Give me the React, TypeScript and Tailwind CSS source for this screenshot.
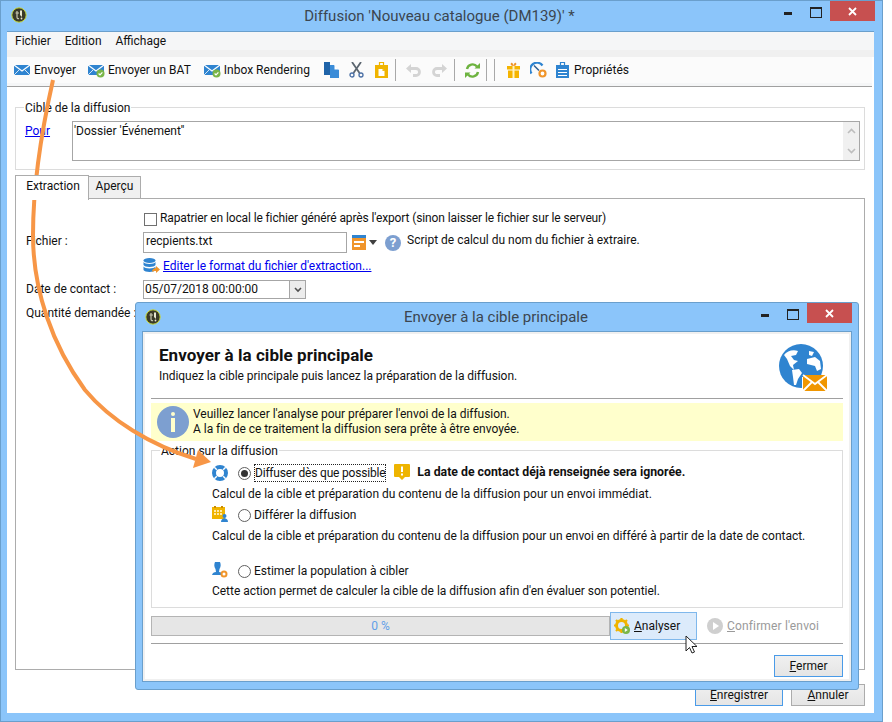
import React from "react";

const FONT = { fontFamily: 'Roboto, "Open Sans", sans-serif' };

function AppLogo() {
  return (
    <svg width="16" height="16" viewBox="0 0 16 16" className="shrink-0">
      <circle cx="8" cy="8" r="7.200" fill="#3a3a28" stroke="#c8d93a" strokeWidth="1" />
      <path d="M6 4v6M4.500 6H8M6 10c0 1.500 1 2 2 1.500" stroke="#c9c9b0" strokeWidth="1.200" fill="none" />
      <path d="M10.500 3.500v6M9.500 3.500v5" stroke="#e8e8d0" strokeWidth="1" fill="none" />
      <circle cx="10.500" cy="11.500" r="0.900" fill="#e8e8d0" />
    </svg>
  );
}

function WinButtons() {
  return (
    <div className="flex items-start">
      <div className="w-[8px] h-[3px] bg-[#222222] mt-[11px]" />
      <div className="w-[10px] h-[8px] border border-[#222222] border-t-2 mt-[6px] ml-[18px] box-content" />
      <div className="w-[45px] h-[20px] bg-[#c75050] ml-[8px] flex items-center justify-center">
        <svg width="9" height="9" viewBox="0 0 9 9">
          <path d="M1 1l7 7M8 1L1 8" stroke="#ffffff" strokeWidth="1.800" />
        </svg>
      </div>
    </div>
  );
}

function Envelope({ check }: { check?: boolean }) {
  return (
    <svg width="17" height="16" viewBox="0 0 17 16" className="shrink-0">
      <path d="M0 3h16v10H0z" fill="#2f84d0" />
      <path d="M0 3l8 6 8-6" stroke="#ffffff" strokeWidth="1.200" fill="none" />
      <path d="M0 13l5-5M16 13l-5-5" stroke="#ffffff" strokeWidth="0.800" fill="none" />
      {check && <circle cx="12.500" cy="11.500" r="4" fill="#7ab648" />}
      {check && <path d="M10.600 11.500l1.400 1.400 2.400-2.600" stroke="#ffffff" strokeWidth="1.200" fill="none" />}
    </svg>
  );
}

function Sep({ ml }: { ml: string }) {
  return <div className={`w-px h-[22px] bg-[#a8a8a8] ${ml}`} />;
}

function Toolbar() {
  return (
    <div className="h-[26px] bg-[#fbfbfb] flex items-center pl-[7px] text-[12px] text-[#111111] mr-[2px]">
      <Envelope />
      <span className="ml-[3px]">Envoyer</span>
      <div className="ml-[12px]"><Envelope check /></div>
      <span className="ml-[3px]">Envoyer un BAT</span>
      <div className="ml-[13px]"><Envelope check /></div>
      <span className="ml-[3px]">Inbox Rendering</span>
      <svg width="15" height="16" viewBox="0 0 15 16" className="ml-[14px] shrink-0">
        <path d="M0 0h6v13H0z" fill="#1f63a8" />
        <path d="M6 3h4l5 5v8H6z" fill="#3a8cd8" />
        <path d="M10.500 3v4.500H15z" fill="#ffffff" />
      </svg>
      <svg width="15" height="16" viewBox="0 0 15 16" className="ml-[10px] shrink-0">
        <path d="M3 0l7.500 11M12 0L4.500 11" stroke="#5c6670" strokeWidth="1.800" />
        <circle cx="3" cy="13" r="2" fill="none" stroke="#4a6fa5" strokeWidth="1.300" />
        <circle cx="12" cy="13" r="2" fill="none" stroke="#4a6fa5" strokeWidth="1.300" />
      </svg>
      <svg width="13" height="16" viewBox="0 0 13 16" className="ml-[11px] shrink-0">
        <path d="M0 3h13v13H0z" fill="#f0b400" />
        <path d="M4.500 .5h4v3h-4z" fill="#fbfbfb" stroke="#f0b400" strokeWidth="1.200" />
        <path d="M3.500 7h4l2 2v5h-6z" fill="#ffffff" />
        <path d="M7.500 7v2h2z" fill="#f0b400" />
      </svg>
      <Sep ml="ml-[7px]" />
      <svg width="16" height="14" viewBox="0 0 16 14" className="ml-[10px] shrink-0">
        <path d="M0 5.500L5 1v9z" fill="#d4d4d4" />
        <path d="M4 5.500h6a3.500 3.500 0 0 1 0 7H7" stroke="#d4d4d4" strokeWidth="2.800" fill="none" />
      </svg>
      <svg width="16" height="14" viewBox="0 0 16 14" className="ml-[9px] shrink-0">
        <path d="M16 5.500L11 1v9z" fill="#d4d4d4" />
        <path d="M12 5.500H6a3.500 3.500 0 0 0 0 7h3" stroke="#d4d4d4" strokeWidth="2.800" fill="none" />
      </svg>
      <Sep ml="ml-[7px]" />
      <svg width="15" height="15" viewBox="0 0 15 15" className="ml-[10px] shrink-0">
        <path d="M2 6a5.700 5.700 0 0 1 10-2.500" stroke="#6db33f" strokeWidth="2.400" fill="none" />
        <path d="M9.500 5.500H15V0z" fill="#6db33f" />
        <path d="M13 9a5.700 5.700 0 0 1-10 2.500" stroke="#6db33f" strokeWidth="2.400" fill="none" />
        <path d="M5.500 9.500H0V15z" fill="#6db33f" />
      </svg>
      <Sep ml="ml-[6px]" />
      <Sep ml="ml-[7px]" />
      <svg width="13" height="16" viewBox="0 0 13 16" className="ml-[12px] shrink-0">
        <path d="M0 4h13v3.500H0zM1 8.500h11V16H1z" fill="#f5b400" />
        <path d="M5.500 4h2v12h-2z" fill="#fff3c4" />
        <path d="M6.500 4C4 4 3 2 4 1s2.500 1 2.500 3C6.500 2 8 0 9 1s0 3-2.500 3z" fill="#f0952b" />
      </svg>
      <svg width="17" height="16" viewBox="0 0 17 16" className="ml-[10px] shrink-0">
        <path d="M1.500 11.500A6.500 6.500 0 0 1 12.500 3.500" stroke="#2f84d0" strokeWidth="2.200" fill="none" />
        <path d="M4 3.500l5 5" stroke="#2f5f90" strokeWidth="1.500" />
        <circle cx="12.500" cy="11.500" r="3" fill="#ffffff" stroke="#f0952b" strokeWidth="2.200" />
      </svg>
      <svg width="13" height="16" viewBox="0 0 13 16" className="ml-[9px] shrink-0">
        <path d="M0 3h13v13H0z" fill="#2f84d0" />
        <path d="M4.500 .5h4v3h-4z" fill="#fbfbfb" stroke="#2f84d0" strokeWidth="1.200" />
        <path d="M2 7.500h9M2 10.500h9M2 13.500h9" stroke="#ffffff" strokeWidth="1" />
      </svg>
      <span className="ml-[5px]">Propriétés</span>
    </div>
  );
}

function PaneForm() {
  return (
    <div className="pl-[10px] text-[12px] text-[#111111]">
      <div className="flex items-center h-[14px] mt-[13px] pl-[118px]">
        <div className="w-[13px] h-[13px] border border-[#707070] bg-white" />
        <span className="ml-[3px] -mt-[2px] whitespace-nowrap tracking-[-0.12px]">Rapatrier en local le fichier généré après l'export (sinon laisser le fichier sur le serveur)</span>
      </div>
      <div className="flex items-center h-[21px] mt-[6px]">
        <span className="w-[117px] -mt-[4px]">Fichier :</span>
        <div className="w-[204px] h-[21px] border border-[#a6a6a6] bg-white pl-[2px] leading-[17px]">recpients.txt</div>
        <svg width="14" height="15" viewBox="0 0 14 15" className="ml-[5px] shrink-0">
          <path d="M0 0h14v15H0z" fill="#f0952b" />
          <path d="M0 0h14v3H0z" fill="#2f84d0" />
          <path d="M2 6h10v2H2zM2 10h6v2H2z" fill="#ffffff" />
        </svg>
        <svg width="8" height="5" viewBox="0 0 8 5" className="ml-[3px] shrink-0"><path d="M0 0h8L4 5z" fill="#404040" /></svg>
        <div className="ml-[8px] w-[16px] h-[16px] rounded-full bg-[#7d9fd0] text-white text-[13px] font-bold flex items-center justify-center leading-none">?</div>
        <span className="ml-[6px] -mt-[5px] whitespace-nowrap">Script de calcul du nom du fichier à extraire.</span>
      </div>
      <div className="flex items-center h-[18px] mt-[4px] pl-[117px]">
        <svg width="17" height="16" viewBox="0 0 17 16" className="shrink-0">
          <ellipse cx="6.500" cy="2.500" rx="6" ry="2.500" fill="#2f84d0" />
          <path d="M.5 4c1 2.500 11 2.500 12 0v3c-1 2.500-11 2.500-12 0zM.5 8.500c1 2.500 11 2.500 12 0V12c-1 2.500-11 2.500-12 0z" fill="#2f84d0" />
          <path d="M9 14c0-3 2-4 4-4V8l4 3.500-4 3.500v-2c-2 0-3 0-4 1z" fill="#f0952b" />
        </svg>
        <span className="ml-[3px] text-[#0000ee] underline whitespace-nowrap">Editer le format du fichier d'extraction...</span>
      </div>
      <div className="flex items-center h-[19px] mt-[5px]">
        <span className="w-[117px] -mt-[2px]">Date de contact :</span>
        <div className="w-[163px] h-[19px] border border-[#a6a6a6] flex items-stretch bg-white">
          <span className="flex-1 pl-px leading-[17px]">05/07/2018 00:00:00</span>
          <div className="w-[16px] bg-[#ececec] border-l border-[#a6a6a6] flex items-center justify-center">
            <svg width="8" height="6" viewBox="0 0 8 6"><path d="M1 1l3 3 3-3" stroke="#505050" strokeWidth="1.600" fill="none" /></svg>
          </div>
        </div>
      </div>
      <div className="h-[16px] mt-[6px] leading-[16px] whitespace-nowrap">Quantité demandée :</div>
    </div>
  );
}

function Window() {
  return (
    <div className="w-[883px] h-[722px] bg-[#8bc5fa] border border-[#6a9fcc] flex flex-col box-border">
      <div className="h-[30px] flex items-start pl-[10px] pr-[7px] shrink-0">
        <div className="mt-[6px]"><AppLogo /></div>
        <div className="flex-1 text-center text-[15px] leading-[30px] text-[#3b4650] pl-[68px]">Diffusion 'Nouveau catalogue (DM139)' *</div>
        <WinButtons />
      </div>
      <div className="ml-[6px] mr-[8px] flex-1 bg-white flex flex-col min-h-0 mb-[8px] border-t border-[#6a9fcc]">
        <div className="h-[18px] bg-[#f5f6f7] flex items-center gap-[14px] pl-[8px] text-[12px] text-[#111111]">
          <span>Fichier</span><span>Edition</span><span>Affichage</span>
        </div>
        <div className="h-[7px] bg-[#f0f0f0]" />
        <Toolbar />
        <div className="h-[3px] bg-[#f5f6f7] mr-[2px]" />
        <div className="h-px bg-[#a0a0a0] mr-[2px]" />
        <div className="flex-1 flex flex-col pl-[8px] pr-[9px] min-h-0">
          <div className="relative mt-[20px] h-[63px] border border-[#dcdcdc] flex items-start shrink-0">
            <span className="absolute left-[8px] -top-[8px] bg-white px-[1px] text-[12px] leading-[16px] text-[#111111]">Cible de la diffusion</span>
            <span className="absolute left-[9px] top-[15px] text-[12px] leading-[16px] text-[#0000ee] underline">Pour</span>
            <div className="ml-[56px] mt-[13px] w-[788px] h-[40px] border border-[#a6a6a6] flex">
              <span className="flex-1 text-[12px] leading-[16px] pl-[1px] pt-[1px] text-[#111111]">'Dossier 'Événement''</span>
              <div className="w-[16px] bg-[#f0f0f0] flex flex-col justify-between items-center py-[6px]">
                <svg width="9" height="6" viewBox="0 0 9 6"><path d="M1 5l3.500-3.500L8 5" stroke="#bdbdbd" strokeWidth="1.600" fill="none" /></svg>
                <svg width="9" height="6" viewBox="0 0 9 6"><path d="M1 1l3.500 3.500L8 1" stroke="#bdbdbd" strokeWidth="1.600" fill="none" /></svg>
              </div>
            </div>
          </div>
          <div className="flex items-end h-[25px] mt-[4px] text-[12px] text-[#111111] shrink-0">
            <div className="w-[74px] h-[25px] border border-b-0 border-[#acacac] bg-white text-center leading-[21px] pl-[2px] relative z-10 -mb-px">Extraction</div>
            <div className="w-[52px] h-[23px] border border-l-0 border-[#acacac] bg-[#f0f0f0] text-center leading-[19px]">Aperçu</div>
          </div>
          <div className="h-[472px] border border-[#acacac] shrink-0 -mt-px">
            <PaneForm />
          </div>
          <div className="flex justify-end gap-[8px] mt-[14px] text-[12px] text-[#111111]">
            <div className="w-[88px] h-[22px] border border-[#4a9be8] bg-gradient-to-b from-[#f0f0f0] to-[#e5e5e5] text-center leading-[20px]"><u>E</u>nregistrer</div>
            <div className="w-[74px] h-[22px] border border-[#acacac] bg-gradient-to-b from-[#f0f0f0] to-[#e5e5e5] text-center leading-[20px]"><u>A</u>nnuler</div>
          </div>
        </div>
      </div>
    </div>
  );
}

function Radio({ on }: { on?: boolean }) {
  return (
    <div className="w-[13px] h-[13px] rounded-full border border-[#606060] bg-white flex items-center justify-center shrink-0">
      {on && <div className="w-[7px] h-[7px] rounded-full bg-[#333333]" />}
    </div>
  );
}

function Globe() {
  return (
    <svg width="49" height="48" viewBox="0 0 49 48" className="shrink-0">
      <circle cx="22" cy="22" r="22" fill="#2f84d0" />
      <path d="M5 11C8 7 14 5 19 7L17 11L12 12L15 16L19 17L14 21L15 26L11 22L8 15Z" fill="#ffffff" />
      <path d="M13 26L20 25L23 29L19 35L17 41L15 41L14 33Z" fill="#ffffff" />
      <path d="M30 7L35 8L33 12L30 11ZM28 15L36 13L41 17L42 25L38 27L36 22L32 21L28 20Z" fill="#ffffff" />
      <path d="M23 33h25v15H23z" fill="#ffffff" />
      <path d="M24 31h24v16H24z" fill="#f09600" />
      <path d="M24 31l12 9 12-9M24 47l9-9M48 47l-9-9" stroke="#ffffff" strokeWidth="1.800" fill="none" />
    </svg>
  );
}

function Dialog() {
  return (
    <div className="absolute left-[135px] top-[302px] w-[724px] h-[388px] bg-[#8bc5fa] border border-[#6a9fcc] rounded-[3px] flex flex-col box-border">
      <div className="h-[29px] flex items-start pl-[9px] pr-[6px] shrink-0">
        <div className="mt-[6px]"><AppLogo /></div>
        <div className="flex-1 text-center text-[15px] leading-[28px] text-[#3b4650] pl-[70px]">Envoyer à la cible principale</div>
        <WinButtons />
      </div>
      <div className="mx-[7px] mb-[8px] flex-1 bg-white border-2 border-[#f0f0f0] outline outline-1 outline-[#6a9fcc] min-h-0 px-[6px] text-[12px] text-[#111111]">
        <div className="h-[64px] flex items-start justify-between pl-[8px] pr-[15px]">
          <div>
            <div className="text-[17px] font-bold leading-[20px] mt-[11px] tracking-[0.05px] text-[#111111]">Envoyer à la cible principale</div>
            <div className="leading-[16px] mt-[3px] tracking-[-0.06px]">Indiquez la cible principale puis lancez la préparation de la diffusion.</div>
          </div>
          <div className="mt-[10px]"><Globe /></div>
        </div>
        <div className="h-px bg-[#a0a0a0]" />
        <div className="h-[38px] mt-[4px] bg-[#ffffcc] flex items-center pl-[6px]">
          <div className="w-[32px] h-[32px] rounded-full bg-[#7d9fd0] flex flex-col items-center justify-center gap-[2px] shrink-0">
            <div className="w-[4px] h-[4px] bg-[#ffffcc] rounded-full" />
            <div className="w-[4px] h-[14px] bg-[#ffffcc]" />
          </div>
          <div className="ml-[4px] leading-[15px] tracking-[-0.03px]">
            <div>Veuillez lancer l'analyse pour préparer l'envoi de la diffusion.</div>
            <div>A la fin de ce traitement la diffusion sera prête à être envoyée.</div>
          </div>
        </div>
        <div className="relative h-[158px] mt-[9px] border border-[#dcdcdc] pl-[60px] pt-[12px]">
          <span className="absolute left-[8px] -top-[8px] bg-white px-[1px] leading-[16px]">Action sur la diffusion</span>
          <div className="flex items-center h-[20px]">
            <svg width="16" height="16" viewBox="0 0 16 16" className="shrink-0">
              <circle cx="8" cy="8" r="6" fill="none" stroke="#2f84d0" strokeWidth="4" />
              <path d="M2.300 2.300l2.500 2.500M13.700 2.300l-2.500 2.500M2.300 13.700l2.500-2.500M13.700 13.700l-2.500-2.500" stroke="#ffffff" strokeWidth="1.400" />
            </svg>
            <div className="ml-[10px]"><Radio on /></div>
            <span className="ml-[3px] border border-dotted border-[#222222] leading-[16px] whitespace-nowrap tracking-[-0.2px]">Diffuser dès que possible</span>
            <svg width="16" height="16" viewBox="0 0 16 16" className="ml-[8px] -mt-[2px] shrink-0">
              <path d="M1 0h14a1 1 0 0 1 1 1v11a1 1 0 0 1-1 1h-4l-3 3-3-3H1a1 1 0 0 1-1-1V1a1 1 0 0 1 1-1z" fill="#eeb400" />
              <path d="M7 2.500h2V8H7zM7 9.500h2v2H7z" fill="#ffffff" />
            </svg>
            <b className="ml-[7px] -mt-[2px] whitespace-nowrap text-[12.300px] font-bold">La date de contact déjà renseignée sera ignorée.</b>
          </div>
          <div className="h-[16px] leading-[16px] mt-[3px]">Calcul de la cible et préparation du contenu de la diffusion pour un envoi immédiat.</div>
          <div className="flex items-center h-[20px] mt-[3px]">
            <svg width="16" height="16" viewBox="0 0 16 16" className="-mt-[3px] shrink-0">
              <path d="M0 1h13v12H0z" fill="#f0b400" />
              <path d="M2 0h2v2H2zM9 0h2v2H9z" fill="#c98a00" />
              <path d="M2 4h2v2H2zM5 4h2v2H5zM8 4h2v2H8zM2 7h2v2H2zM5 7h2v2H5zM8 7h2v2H8z" fill="#ffe9a8" />
              <circle cx="12.500" cy="10" r="2" fill="#2f84d0" />
              <path d="M9 16c0-5 7-5 7 0z" fill="#2f84d0" />
            </svg>
            <div className="ml-[10px]"><Radio /></div>
            <span className="ml-[3px] whitespace-nowrap">Différer la diffusion</span>
          </div>
          <div className="h-[16px] leading-[16px] mt-[3px] whitespace-nowrap tracking-[-0.02px]">Calcul de la cible et préparation du contenu de la diffusion pour un envoi en différé à partir de la date de contact.</div>
          <div className="flex items-center h-[20px] mt-[17px]">
            <svg width="16" height="16" viewBox="0 0 16 16" className="-mt-[2px] shrink-0">
              <path d="M3 0h5c1 2 1 5-.5 7L7 10c2 0 3 1 3.500 3H0c.5-2 2-3 4-3l-.5-3C2 5 2 2 3 0z" fill="#2f84d0" />
              <circle cx="12" cy="12" r="2.500" fill="#ffffff" stroke="#f0952b" strokeWidth="2" />
            </svg>
            <div className="ml-[10px]"><Radio /></div>
            <span className="ml-[3px] whitespace-nowrap">Estimer la population à cibler</span>
          </div>
          <div className="h-[16px] leading-[16px] mt-[2px] whitespace-nowrap tracking-[-0.03px]">Cette action permet de calculer la cible de la diffusion afin d'en évaluer son potentiel.</div>
        </div>
        <div className="flex items-center h-[28px] mt-[4px]">
          <div className="w-[459px] h-[20px] bg-[#e6e6e6] border border-[#b4b4b4] text-center leading-[18px] text-[#5fa0e8]">0 %</div>
          <div className="w-[87px] h-[28px] bg-[#dcebfb] border border-[#7fb8ec] flex items-center pl-[3px]">
            <svg width="17" height="17" viewBox="0 0 17 17" className="shrink-0">
              <circle cx="7.500" cy="7.500" r="5" fill="none" stroke="#f0b400" strokeWidth="3" />
              <path d="M7.500 0v3M7.500 12v3M0 7.500h3M12 7.500h3M2 2l2 2M13 2l-2 2M2 13l2-2" stroke="#f0b400" strokeWidth="2.200" />
              <circle cx="12" cy="12" r="4" fill="#7ab648" />
              <path d="M10.800 10v4l3-2z" fill="#ffffff" />
            </svg>
            <span className="ml-[3px]"><u>A</u>nalyser</span>
          </div>
          <svg width="16" height="16" viewBox="0 0 16 16" className="ml-[10px] shrink-0">
            <circle cx="8" cy="8" r="8" fill="#cfcfcf" />
            <path d="M6 4v8l6-4z" fill="#ffffff" />
          </svg>
          <span className="ml-[4px] text-[#9a9a9a] whitespace-nowrap tracking-[0.15px]"><u>C</u>onfirmer l'envoi</span>
        </div>
        <div className="h-px bg-[#a0a0a0] mt-[3px]" />
        <div className="flex justify-end mt-[11px]">
          <div className="w-[69px] h-[22px] border border-[#4a9be8] bg-gradient-to-b from-[#f0f0f0] to-[#e5e5e5] text-center leading-[20px]"><u>F</u>ermer</div>
        </div>
      </div>
    </div>
  );
}

export default function App() {
  return (
    <div className="relative w-[892px] h-[722px] bg-white overflow-hidden" style={FONT}>
      <Window />
      <Dialog />
      <svg className="absolute left-0 top-0 pointer-events-none" width="892" height="722" viewBox="0 0 892 722">
        <path d="M53 80C44 120 33 180 33 235C33 290 52 345 85 390C110 420 150 445 196 459" fill="none" stroke="#f79646" strokeWidth="4" />
        <path d="M211 462L193 468L198 450z" fill="#f79646" />
      </svg>
      <svg className="absolute left-[685px] top-[635px] pointer-events-none" width="13" height="20" viewBox="0 0 13 20">
        <path d="M1 1v15l3.500-3.500L7 18l2.500-1L7 11.500h5z" fill="#ffffff" stroke="#222222" strokeWidth="1" />
      </svg>
    </div>
  );
}
